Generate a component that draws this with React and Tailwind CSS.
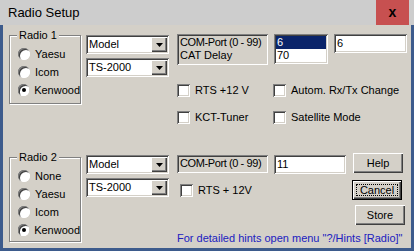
import React from "react";

const sunken =
  "shadow-[inset_1px_1px_0_#808080,inset_-1px_-1px_0_#ffffff,inset_2px_2px_0_#404040,inset_-2px_-2px_0_#d4d0c8]";
const raised =
  "shadow-[inset_1px_1px_0_#ffffff,inset_-1px_-1px_0_#404040,inset_-2px_-2px_0_#808080]";

function Select({ label }) {
  return (
    <div className={`flex h-[19px] w-[83px] bg-white p-[2px] ${sunken}`}>
      <div className="flex-1 pl-[1px] text-[11px] leading-[15px] text-black">{label}</div>
      <div className={`flex h-[15px] w-[16px] items-center justify-center bg-[#d4d0c8] ${raised}`}>
        <svg width="7" height="4" viewBox="0 0 7 4">
          <path d="M0 0h7L3.5 4z" fill="#000" />
        </svg>
      </div>
    </div>
  );
}

function Radio({ label, checked }) {
  return (
    <div className="flex h-[18px] items-center">
      <div className="relative ml-[8px] h-[12px] w-[12px] rounded-full bg-white shadow-[inset_1px_1px_0_#808080,inset_-1px_-1px_0_#ffffff,inset_2px_2px_0_#404040]">
        {checked && (
          <div className="absolute left-[4px] top-[4px] h-[4px] w-[4px] rounded-full bg-black" />
        )}
      </div>
      <span className="ml-[5px] text-[11px] leading-[13px] text-black">{label}</span>
    </div>
  );
}

function Check({ label, className = "" }) {
  return (
    <div className={`flex h-[13px] items-center ${className}`}>
      <div className={`h-[13px] w-[13px] bg-white ${sunken}`} />
      <span className="ml-[5px] whitespace-nowrap text-[11px] leading-[13px] text-black">{label}</span>
    </div>
  );
}

function Group({ title, children, className = "" }) {
  return (
    <div
      className={`relative border border-[#808080] shadow-[inset_1px_1px_0_#ffffff,1px_1px_0_#ffffff] ${className}`}
    >
      <span className="absolute left-[7px] top-[-7px] bg-[#d4d0c8] px-[2px] text-[11px] leading-[13px] text-black">
        {title}
      </span>
      {children}
    </div>
  );
}

function Button({ label, focus }) {
  if (focus) {
    return (
      <div className="h-[20px] w-[50px] border border-black bg-[#d4d0c8]">
        <div className={`flex h-full w-full items-center justify-center p-[3px] ${raised}`}>
          <div className="flex h-full w-full items-center justify-center border border-dotted border-black text-[11px] leading-[13px] text-black">
            {label}
          </div>
        </div>
      </div>
    );
  }
  return (
    <div
      className={`flex h-[20px] w-[50px] items-center justify-center bg-[#d4d0c8] text-[11px] leading-[13px] text-black ${raised}`}
    >
      {label}
    </div>
  );
}

export default function App() {
  return (
    <div
      className="flex h-[251px] w-[414px] flex-col bg-[#3d5b8c] pb-[3px] pl-[3px] pr-[3px]"
      style={{ fontFamily: '"Liberation Sans", Arial, sans-serif' }}
    >
      {/* title bar */}
      <div className="-ml-[3px] -mr-[3px] flex h-[25px] items-stretch bg-[#cdcdcd] pl-[8px]">
        <div className="flex flex-1 items-center text-[13px] text-black">Radio Setup</div>
        <div className="mr-[5px] flex w-[33px] items-center justify-center bg-[#c75050] text-[14px] font-bold text-black">
          x
        </div>
      </div>
      {/* body */}
      <div className="flex flex-1 flex-col bg-[#d4d0c8]">
        {/* top section */}
        <div className="flex h-[128px] items-start">
          <Group title="Radio 1" className="ml-[6px] mt-[10px] h-[69px] w-[72px] pt-[9px]">
            <Radio label="Yaesu" />
            <Radio label="Icom" />
            <Radio label="Kenwood" checked />
          </Group>
          <div className="ml-[5px] mt-[10px] flex flex-col gap-[4px]">
            <Select label="Model" />
            <Select label="TS-2000" />
          </div>
          <div className="ml-[8px] mt-[9px] flex flex-col">
            <div className="flex items-start">
              <div className={`h-[31px] w-[91px] px-[3px] pt-[2px] text-[11px] leading-[13px] text-black ${sunken}`}>
                <div className="tracking-[-0.4px]">COM-Port (0 - 99)</div>
                <div>CAT Delay</div>
              </div>
              <div className={`ml-[6px] h-[30px] w-[54px] bg-white p-[2px] ${sunken}`}>
                <div className="h-[13px] bg-[#0a246a] pl-[1px] text-[11px] leading-[13px] text-white">6</div>
                <div className="pl-[1px] text-[11px] leading-[13px] text-black">70</div>
              </div>
              <div className={`ml-[6px] h-[19px] w-[73px] bg-white px-[3px] pt-[3px] text-[11px] leading-[13px] text-black ${sunken}`}>
                6
              </div>
            </div>
            <div className="mt-[19px] flex">
              <Check label="RTS +12 V" className="w-[96px]" />
              <Check label="Autom. Rx/Tx Change" />
            </div>
            <div className="mt-[14px] flex">
              <Check label="KCT-Tuner" className="w-[96px]" />
              <Check label="Satellite Mode" />
            </div>
          </div>
        </div>
        {/* bottom section */}
        <div className="flex flex-1 items-start">
          <Group title="Radio 2" className="ml-[6px] mt-[4px] h-[85px] w-[72px] pt-[9px]">
            <Radio label="None" />
            <Radio label="Yaesu" />
            <Radio label="Icom" />
            <Radio label="Kenwood" checked />
          </Group>
          <div className="ml-[5px] mt-[2px] flex flex-col gap-[4px]">
            <Select label="Model" />
            <Select label="TS-2000" />
          </div>
          <div className="ml-[8px] flex flex-1 flex-col">
            <div className="flex items-start">
              <div className="mt-[2px] flex">
                <div className={`h-[18px] w-[91px] px-[3px] pt-[2px] text-[11px] leading-[13px] text-black ${sunken}`}>
                  <div className="tracking-[-0.4px]">COM-Port (0 - 99)</div>
                </div>
                <div className={`ml-[6px] h-[19px] w-[72px] bg-white px-[3px] pt-[3px] text-[11px] leading-[13px] text-black ${sunken}`}>
                  11
                </div>
              </div>
              <div className="ml-[7px]">
                <Button label="Help" />
              </div>
            </div>
            <div className="mt-[6px] flex items-start">
              <Check label="RTS + 12V" className="ml-[3px] mt-[4px] w-[172px]" />
              <Button label="Cancel" focus />
            </div>
            <div className="mt-[5px] flex justify-end pr-[6px]">
              <Button label="Store" />
            </div>
            <div className="mt-[7px] whitespace-nowrap text-[11px] leading-[13px] text-[#2020c0]">
              For detailed hints open menu "?/Hints [Radio]"
            </div>
          </div>
        </div>
      </div>
    </div>
  );
}
